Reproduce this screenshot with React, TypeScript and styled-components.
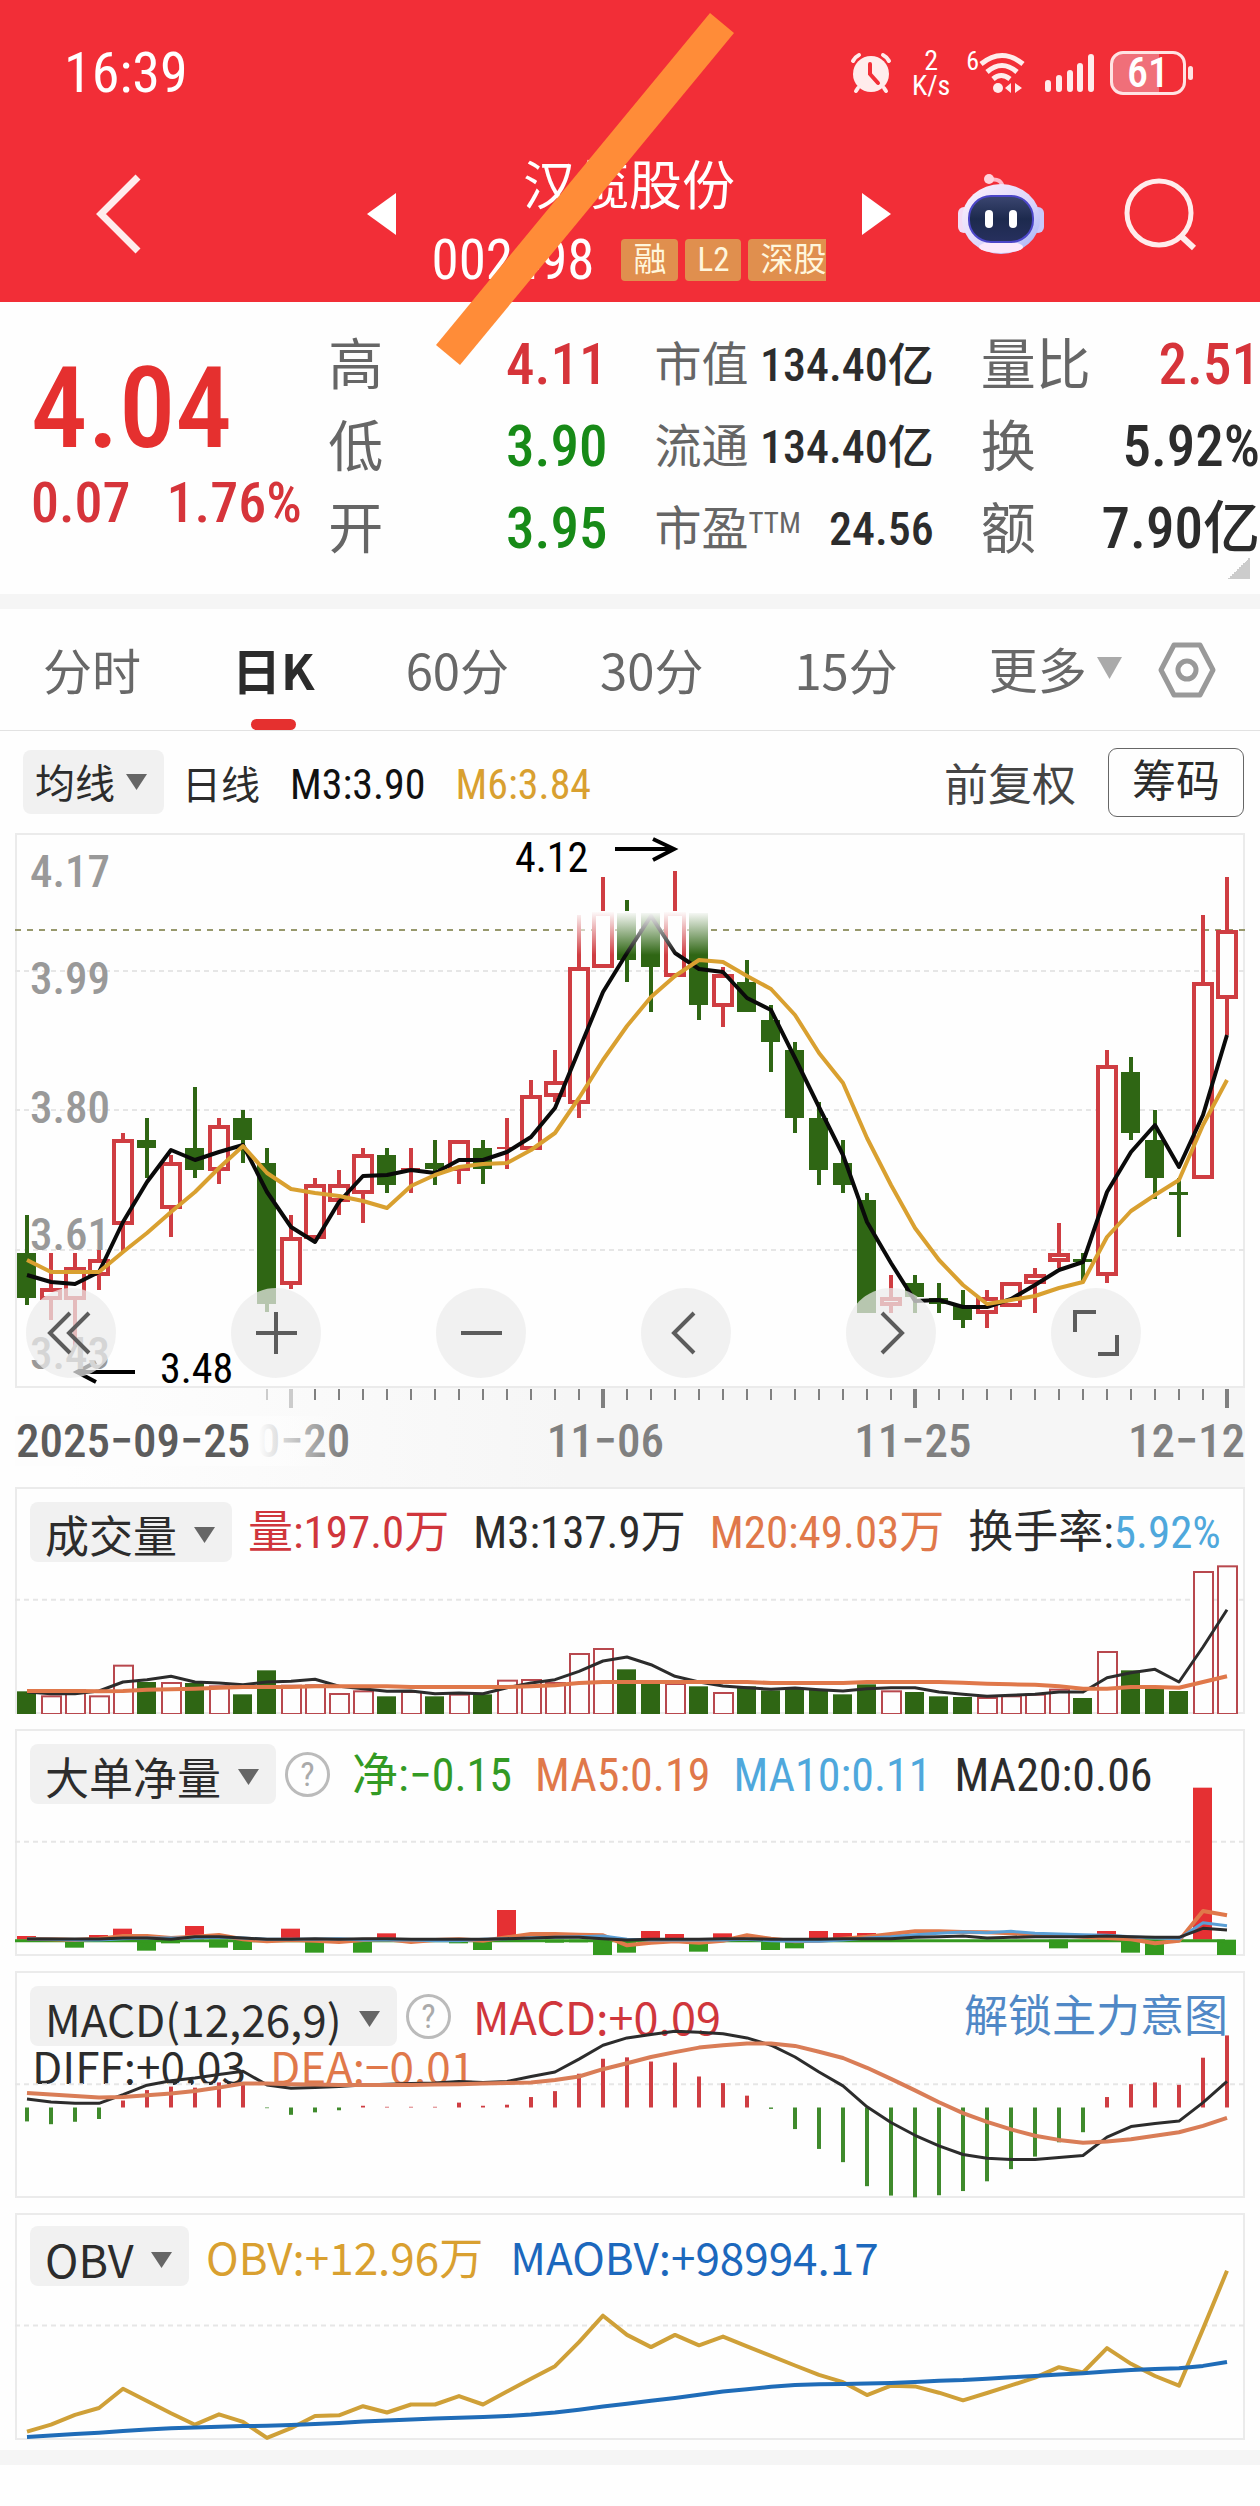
import React from "react";
import styled, { createGlobalStyle } from "styled-components";

const RED = "#f22e37";
const UP = "#cf3d42";
const DOWN = "#2f6614";
const GOLD = "#d9a030";
const ORANGE = "#e0784a";
const INK = "#2c2c2c";
const WIDE = `"Noto Sans CJK SC", sans-serif`;

const GlobalStyle = createGlobalStyle`
  * { box-sizing: border-box; }
  body {
    margin: 0;
    background: #fefefe;
    color: ${INK};
    font-family: "Roboto Condensed", "Noto Sans CJK SC", sans-serif;
  }
  button, select {
    margin: 0;
    padding: 0;
    border: 0;
    background: none;
    color: inherit;
    font: inherit;
    cursor: pointer;
  }
  svg { display: block; }
`;

/* ---------- header ---------- */

const Page = styled.main`
  position: relative;
  overflow: hidden;
`;

const Header = styled.header`
  background: ${RED};
  color: #fff;
  height: 302px;
`;

const StatusBar = styled.div`
  display: flex;
  align-items: center;
  justify-content: space-between;
  padding: 20px 67px 0 64px;
  height: 126px;
`;

const Clock = styled.time`
  font-size: 56px;
  line-height: 60px;
`;

const StatusIcons = styled.div`
  display: flex;
  align-items: center;
`;

const Speed = styled.div`
  display: flex;
  flex-direction: column;
  align-items: center;
  width: 40px;
  margin: 0 15px 0 19px;
  font-size: 28px;
  line-height: 25px;
`;

const WifiGen = styled.span`
  align-self: flex-start;
  font-size: 26px;
  line-height: 26px;
`;

const SignalIcon = styled.svg`
  margin-left: 20px;
`;

const Battery = styled.div`
  display: flex;
  align-items: center;
  justify-content: center;
  width: 76px;
  height: 44px;
  margin-left: 15px;
  border: 3px solid #ffe3e3;
  border-radius: 13px;
  background: linear-gradient(90deg, #f06f79 66%, transparent 66%);
  font-size: 42px;
  font-weight: 500;
  line-height: 40px;
`;

const BatteryTip = styled.i`
  width: 5px;
  height: 14px;
  margin-left: 2px;
  border-radius: 3px;
  background: #ffe3e3;
`;

const TitleBar = styled.div`
  display: flex;
  align-items: center;
  padding: 0 62px 0 94px;
  height: 175px;
`;

const IconButton = styled.button`
  flex: none;
`;

const SearchButton = styled(IconButton)`
  margin-left: 79px;
`;

const StockNav = styled.div`
  display: flex;
  align-items: center;
  justify-content: space-between;
  flex: 1;
  margin: 0 66px 0 225px;
`;

const StockTitle = styled.div`
  display: flex;
  flex-direction: column;
  align-items: center;
  padding-top: 20px;
`;

const StockName = styled.h1`
  margin: 0;
  font-size: 53px;
  font-weight: 400;
  line-height: 72px;
`;

const CodeRow = styled.div`
  display: flex;
  align-items: center;
  gap: 7px;
  height: 74px;
`;

const Code = styled.span`
  margin-right: 20px;
  font-size: 55px;
  line-height: 60px;
`;

const Tag = styled.span<{ $open?: boolean }>`
  height: 42px;
  padding: 0 ${(p) => (p.$open ? 0 : 12)}px 0 12px;
  border-radius: ${(p) => (p.$open ? "4px 0 0 4px" : "4px")};
  background: #e08f4e;
  color: #fff6dc;
  font-size: 33px;
  line-height: 42px;
`;

const Marker = styled.svg`
  position: absolute;
  top: 0;
  left: calc(50% - 230px);
  pointer-events: none;
`;

/* ---------- quote ---------- */

const Quote = styled.section`
  position: relative;
  display: grid;
  grid-template-columns: minmax(0, 250fr) minmax(0, 279fr) minmax(0, 279fr) minmax(0, 279fr);
  column-gap: 47px;
  padding: 22px 0 24px 31px;
  border-bottom: 15px solid #f5f5f5;
  white-space: nowrap;
`;

const PriceBlock = styled.div`
  padding-top: 35px;
  color: #e5302f;
  font-weight: 500;
`;

const Price = styled.div`
  font-size: 113px;
  line-height: 100px;
`;

const Change = styled.div`
  display: flex;
  gap: 36px;
  margin-top: 14px;
  color: #d6343a;
  font-size: 56px;
  line-height: 60px;
`;

const Stats = styled.dl`
  margin: 0;
`;

const Stat = styled.div`
  display: flex;
  align-items: center;
  justify-content: space-between;
  height: 82px;
`;

const StatLabel = styled.dt<{ $small?: boolean }>`
  color: #666;
  font-size: ${(p) => (p.$small ? 47 : 55)}px;
  line-height: 80px;
`;

const Sup = styled.sup`
  font-size: 29px;
  line-height: 0;
  vertical-align: 12px;
`;

const StatValue = styled.dd<{ $small?: boolean; $color?: string }>`
  margin: 0;
  color: ${(p) => p.$color ?? INK};
  font-size: ${(p) => (p.$small ? 46 : 57)}px;
  font-weight: 500;
  line-height: 80px;
`;

const Corner = styled.i`
  position: absolute;
  right: 10px;
  bottom: 15px;
  width: 22px;
  height: 22px;
  background: linear-gradient(135deg, transparent 50%, #ccc 50%);
`;

/* ---------- period tabs ---------- */

const Tabs = styled.nav`
  display: flex;
  align-items: stretch;
  justify-content: space-between;
  height: 122px;
  padding: 0 44px 0 43px;
  border-bottom: 1px solid #e2e2e2;
  font-family: ${WIDE};
  font-size: 49px;
  line-height: 74px;
  white-space: nowrap;
`;

const TabList = styled.div`
  display: flex;
  gap: 91px;
`;

const Tab = styled.button<{ $active?: boolean }>`
  display: flex;
  flex-direction: column;
  align-items: center;
  justify-content: flex-end;
  color: ${(p) => (p.$active ? INK : "#686868")};
  font-weight: ${(p) => (p.$active ? 700 : 400)};

  &::after {
    content: "";
    width: 45px;
    height: 11px;
    margin-top: 13px;
    border-radius: 6px;
    background: ${(p) => (p.$active ? "#e5302f" : "transparent")};
  }
`;

const MoreTab = styled.button`
  display: flex;
  align-items: center;
  gap: 10px;
  padding-bottom: 3px;
  color: #686868;
`;

/* ---------- chart toolbar ---------- */

const Toolbar = styled.div`
  display: flex;
  align-items: center;
  height: 102px;
  padding: 0 16px 0 23px;
  white-space: nowrap;
`;

const PickerBox = styled.span<{ $h: number }>`
  display: inline-grid;
  flex: none;
  height: ${(p) => p.$h}px;
  border-radius: 8px;
  background: #f1f1f1;

  > * { grid-area: 1 / 1; }
  > svg {
    align-self: center;
    justify-self: end;
    margin-right: 17px;
    pointer-events: none;
  }
`;

const PickerSelect = styled.select<{ $size: number; $compact?: boolean }>`
  appearance: none;
  padding: 0 ${(p) => (p.$compact ? 49 : 55)}px 2px ${(p) => (p.$compact ? 12 : 15)}px;
  color: ${INK};
  font-family: ${WIDE};
  font-size: ${(p) => p.$size}px;
`;

const Legend = styled.span<{ $color?: string; $size?: number }>`
  color: ${(p) => p.$color ?? INK};
  font-size: ${(p) => p.$size ?? 42}px;
`;

const LineLegend = styled.div`
  display: flex;
  align-items: baseline;
  gap: 30px;
  margin-left: 18px;
`;

const Adjust = styled.button`
  margin: 0 32px 0 auto;
  color: #444;
  font-size: 44px;
`;

const Chips = styled.button`
  width: 136px;
  height: 69px;
  border: 1px solid #666;
  border-radius: 9px;
  font-size: 44px;
  line-height: 64px;
`;

/* ---------- charts ---------- */

const ChartArea = styled.section`
  padding: 0 15px 10px;
  border-bottom: 15px solid #f5f5f5;
`;

const Frame = styled.div<{ $h: number }>`
  position: relative;
  display: grid;
  grid-template-columns: minmax(0, 1fr);
  height: ${(p) => p.$h}px;
  box-shadow: inset 0 0 0 2px #ebebeb;

  > * { grid-area: 1 / 1; }
`;

const Plot = styled.svg`
  width: 100%;
  height: 100%;
  pointer-events: none;
`;

const PriceTick = styled.span<{ $y: number }>`
  position: absolute;
  left: 15px;
  top: ${(p) => p.$y}px;
  color: #999;
  font-size: 45px;
  font-weight: 500;
  line-height: 50px;
`;

const Extreme = styled.span<{ $x: number; $y: number }>`
  position: absolute;
  left: ${(p) => p.$x}px;
  top: ${(p) => p.$y}px;
  color: #000;
  font-size: 42px;
  line-height: 44px;
`;

const Controls = styled.div`
  z-index: 1;
  display: flex;
  align-items: center;
  align-self: end;
  gap: 115px;
  padding: 0 0 10px 11px;
`;

const RoundButton = styled.button`
  display: grid;
  place-items: center;
  width: 90px;
  height: 90px;
  border-radius: 50%;
  background: rgba(236, 236, 236, 0.72);
`;

const Axis = styled.div`
  position: relative;
  height: 99px;
  background: linear-gradient(90deg, #fefefe 4%, #f6f6f6 45%, #f6f6f6);
  color: #808080;
  font-size: 47px;
  font-weight: 500;
  line-height: 50px;
`;

const AxisDate = styled.span<{ $x: number }>`
  position: absolute;
  top: 28px;
  left: ${(p) => p.$x}%;
  transform: translateX(-50%);
`;

const LastDate = styled.span`
  position: absolute;
  top: 28px;
  right: 0;
`;

const FirstDate = styled.span`
  position: absolute;
  top: 28px;
  left: 0;
  padding: 0 90px 0 1px;
  background: linear-gradient(90deg, #fdfdfd 75%, rgba(253, 253, 253, 0));
  color: #5c5c5c;
`;

const Panels = styled.div`
  display: flex;
  flex-direction: column;
  gap: 15px;
`;

const PanelHead = styled.div<{ $wrap?: boolean }>`
  align-self: start;
  display: flex;
  flex-wrap: ${(p) => (p.$wrap ? "wrap" : "nowrap")};
  align-items: center;
  padding: 13px 17px 0 15px;
  white-space: nowrap;
`;

const Readings = styled.div<{ $gap: number; $lead: number; $wide?: boolean }>`
  display: flex;
  gap: ${(p) => p.$gap}px;
  margin-left: ${(p) => p.$lead}px;
  padding-top: ${(p) => (p.$wide ? 0 : 2)}px;
  font-family: ${(p) => (p.$wide ? WIDE : "inherit")};
  line-height: ${(p) => (p.$wide ? 60 : 62)}px;
`;

const SecondLine = styled.div`
  display: flex;
  flex-basis: 100%;
  gap: 24px;
  padding-left: 2px;
  font-family: ${WIDE};
  line-height: 34px;
`;

const Help = styled.button`
  width: 45px;
  height: 45px;
  margin-left: 9px;
  border: 3px solid #bbb;
  border-radius: 50%;
  color: #aaa;
  font-size: 34px;
  line-height: 36px;
`;

const Unlock = styled.a`
  margin-left: auto;
  padding-top: 2px;
  color: #5088c6;
  font-size: 44px;
  line-height: 62px;
  text-decoration: none;
`;

/* ---------- data ---------- */

type Candle = [up: number, high: number, top: number, bottom: number, low: number];

// Vertical positions in the price frame, offset by PRICE_TOP.
const PRICE_TOP = 833;
const candles: Candle[] = [
  [0, 1215, 1253, 1298, 1305], [1, 1253, 1288, 1299, 1320], [1, 1253, 1267, 1299, 1347],
  [1, 1250, 1259, 1275, 1290], [1, 1133, 1139, 1224, 1252], [0, 1118, 1140, 1148, 1178],
  [1, 1155, 1162, 1208, 1237], [0, 1087, 1148, 1170, 1178], [1, 1118, 1125, 1170, 1184],
  [0, 1110, 1118, 1140, 1163], [0, 1148, 1163, 1304, 1312], [1, 1215, 1237, 1284, 1289],
  [1, 1178, 1184, 1238, 1243], [1, 1170, 1184, 1201, 1215], [1, 1148, 1154, 1193, 1223],
  [0, 1148, 1155, 1185, 1193], [1, 1148, 1168, 1170, 1193], [0, 1140, 1163, 1169, 1185],
  [1, 1140, 1140, 1170, 1184], [0, 1140, 1148, 1169, 1184], [1, 1118, 1147, 1149, 1169],
  [1, 1080, 1095, 1149, 1149], [1, 1050, 1081, 1096, 1102], [1, 915, 967, 1103, 1118],
  [1, 877, 912, 967, 967], [0, 900, 913, 960, 982], [0, 913, 913, 967, 1012],
  [1, 871, 912, 976, 976], [0, 913, 913, 1005, 1020], [1, 967, 974, 1006, 1027],
  [0, 960, 982, 1012, 1012], [0, 1005, 1020, 1042, 1072], [0, 1042, 1050, 1118, 1133],
  [0, 1102, 1118, 1170, 1185], [0, 1140, 1163, 1185, 1193], [0, 1193, 1200, 1313, 1313],
  [1, 1275, 1297, 1305, 1313], [0, 1275, 1283, 1297, 1313], [0, 1283, 1298, 1304, 1313],
  [0, 1290, 1306, 1320, 1328], [1, 1290, 1297, 1313, 1328], [1, 1282, 1282, 1306, 1306],
  [1, 1268, 1274, 1283, 1313], [1, 1223, 1253, 1261, 1268], [0, 1253, 1259, 1262, 1282],
  [1, 1050, 1065, 1275, 1283], [0, 1057, 1072, 1133, 1140], [0, 1110, 1140, 1178, 1199],
  [0, 1178, 1192, 1195, 1237], [1, 915, 982, 1178, 1178], [1, 877, 930, 998, 1035],
];
const ma3 = [1275, 1282, 1284, 1272, 1222, 1182, 1150, 1160, 1152, 1145, 1192, 1227, 1242, 1202, 1176, 1175, 1170, 1173, 1160, 1160, 1152, 1137, 1108, 1050, 992, 953, 916, 953, 969, 972, 998, 1010, 1058, 1107, 1155, 1222, 1263, 1301, 1300, 1307, 1307, 1299, 1285, 1270, 1262, 1192, 1152, 1125, 1167, 1115, 1035];
const ma6 = [1260, 1272, 1272, 1272, 1252, 1233, 1212, 1192, 1168, 1146, 1173, 1189, 1193, 1196, 1201, 1208, 1186, 1175, 1167, 1164, 1163, 1150, 1133, 1098, 1060, 1026, 997, 976, 960, 962, 976, 989, 1015, 1053, 1083, 1138, 1185, 1228, 1260, 1285, 1304, 1300, 1296, 1288, 1282, 1237, 1211, 1195, 1180, 1125, 1080];

// The indicator series are kept at three units per pixel of panel height.
const volTop = [633, 645, 627, 645, 553, 605, 605, 608, 615, 642, 570, 613, 612, 638, 630, 648, 632, 648, 640, 642, 598, 596, 605, 518, 503, 567, 605, 608, 618, 635, 618, 630, 623, 628, 642, 612, 630, 635, 648, 650, 650, 645, 640, 625, 653, 512, 570, 625, 632, 272, 255];
const vol3 = [635, 640, 640, 632, 605, 598, 588, 605, 608, 613, 605, 603, 597, 618, 625, 633, 632, 640, 638, 640, 622, 608, 598, 573, 542, 530, 553, 588, 605, 617, 622, 627, 623, 628, 632, 625, 622, 622, 635, 642, 648, 645, 642, 635, 635, 592, 577, 567, 605, 500, 388];
const vol20 = [632, 632, 632, 633, 632, 628, 627, 625, 622, 620, 620, 620, 618, 618, 618, 618, 620, 620, 620, 620, 620, 618, 615, 608, 605, 605, 605, 605, 605, 605, 605, 608, 608, 608, 608, 605, 605, 605, 605, 607, 610, 612, 613, 618, 625, 625, 620, 620, 622, 605, 588];

const netBars: [number, number][] = [
  [0, 1368], [2, 1403], [3, 1365], [4, 1346], [5, 1412], [6, 1390], [7, 1338], [8, 1403], [9, 1410],
  [11, 1346], [12, 1418], [14, 1418], [15, 1360], [18, 1390], [19, 1410], [20, 1290], [22, 1388],
  [23, 1387], [24, 1425], [25, 1418], [26, 1353], [27, 1362], [28, 1415], [29, 1360], [31, 1410],
  [32, 1405], [33, 1353], [34, 1359], [35, 1359], [43, 1405], [45, 1353], [46, 1418], [47, 1425],
  [49, 923], [50, 1425],
];
const net5 = [1376, 1378, 1380, 1376, 1368, 1368, 1374, 1370, 1365, 1378, 1384, 1380, 1382, 1386, 1380, 1378, 1386, 1380, 1378, 1382, 1372, 1362, 1362, 1364, 1366, 1396, 1388, 1384, 1388, 1382, 1366, 1376, 1384, 1382, 1376, 1370, 1362, 1354, 1354, 1356, 1357, 1360, 1364, 1366, 1370, 1374, 1378, 1390, 1382, 1293, 1306];
const net10 = [1377, 1378, 1380, 1380, 1376, 1374, 1374, 1374, 1372, 1374, 1378, 1378, 1378, 1376, 1380, 1380, 1380, 1382, 1382, 1378, 1376, 1374, 1372, 1370, 1368, 1378, 1380, 1380, 1380, 1380, 1378, 1382, 1384, 1384, 1380, 1374, 1370, 1364, 1360, 1356, 1358, 1354, 1360, 1362, 1364, 1366, 1370, 1374, 1376, 1328, 1337];
const net20 = [1377, 1377, 1377, 1377, 1374, 1374, 1378, 1370, 1370, 1374, 1378, 1378, 1376, 1378, 1376, 1376, 1378, 1378, 1378, 1378, 1376, 1374, 1372, 1372, 1376, 1380, 1378, 1378, 1378, 1376, 1376, 1378, 1378, 1378, 1376, 1376, 1376, 1372, 1370, 1368, 1374, 1372, 1370, 1370, 1370, 1368, 1370, 1372, 1372, 1345, 1350];

const macdBar = [462, 470, 463, 455, 402, 372, 362, 365, 350, 352, 424, 443, 436, 430, 417, 420, 420, 420, 408, 417, 414, 392, 375, 325, 282, 278, 290, 293, 333, 352, 388, 426, 484, 541, 579, 648, 675, 680, 674, 662, 634, 599, 563, 522, 493, 392, 355, 350, 357, 279, 215];
const diff = [398, 406, 410, 410, 385, 358, 345, 337, 327, 318, 357, 367, 365, 362, 357, 355, 353, 352, 347, 350, 347, 333, 320, 283, 243, 222, 212, 203, 206, 210, 222, 243, 277, 320, 360, 420, 465, 502, 532, 557, 568, 571, 571, 566, 560, 507, 477, 468, 461, 408, 347];
const dea = [380, 385, 389, 393, 392, 387, 382, 375, 365, 353, 353, 355, 356, 357, 357, 357, 357, 356, 355, 353, 352, 350, 343, 333, 312, 295, 277, 263, 250, 243, 238, 238, 245, 262, 280, 308, 340, 373, 407, 438, 463, 485, 503, 515, 523, 520, 513, 503, 493, 475, 452];

const obv = [1355, 1335, 1307, 1287, 1232, 1267, 1302, 1335, 1305, 1327, 1373, 1345, 1310, 1308, 1282, 1300, 1277, 1277, 1253, 1277, 1240, 1203, 1167, 1098, 1022, 1077, 1112, 1077, 1107, 1082, 1110, 1137, 1165, 1192, 1213, 1250, 1223, 1225, 1243, 1265, 1244, 1222, 1200, 1170, 1185, 1115, 1160, 1195, 1223, 1060, 893];
const maobv = [1370, 1366, 1362, 1358, 1353, 1349, 1345, 1343, 1341, 1339, 1338, 1336, 1333, 1330, 1326, 1323, 1320, 1317, 1315, 1313, 1310, 1306, 1300, 1292, 1283, 1275, 1266, 1258, 1249, 1240, 1233, 1226, 1221, 1219, 1218, 1217, 1215, 1212, 1209, 1207, 1203, 1199, 1195, 1191, 1187, 1182, 1178, 1175, 1173, 1166, 1155];

const xOf = (i: number) => 12 + 24 * i;
const points = (values: number[], y: (v: number) => number) =>
  values.map((v, i) => `${xOf(i)},${y(v).toFixed(1)}`).join(" ");

/* ---------- small parts ---------- */

function Caret({ w = 21, h = 16, color = "#666" }: { w?: number; h?: number; color?: string }) {
  return (
    <svg width={w} height={h} viewBox="0 0 20 16" preserveAspectRatio="none" aria-hidden="true">
      <path d="M0 0H20L10 16Z" fill={color} />
    </svg>
  );
}

function Picker({ label, text, size, height = 60, compact }: { label: string; text: string; size: number; height?: number; compact?: boolean }) {
  return (
    <PickerBox $h={height}>
      <PickerSelect aria-label={label} $size={size} $compact={compact} defaultValue={text}>
        <option>{text}</option>
      </PickerSelect>
      <Caret />
    </PickerBox>
  );
}

function Line({ values, y, color, width = 4 }: { values: number[]; y: (v: number) => number; color: string; width?: number }) {
  return <polyline points={points(values, y)} fill="none" stroke={color} strokeWidth={width} strokeLinejoin="round" />;
}

function Guide({ y }: { y: number }) {
  return <line x1="0" x2="1230" y1={y} y2={y} stroke="#e6e6e6" strokeWidth="2" strokeDasharray="5 4" />;
}

function StatusGlyphs() {
  return (
    <StatusIcons>
      <svg width="42" height="42" viewBox="0 0 42 42" aria-label="闹钟" stroke="#ffecec" strokeLinecap="round">
        <path d="M3 9Q5 5 9 3M39 9Q37 5 33 3M8 36L6 39M34 36L36 39" strokeWidth="4" fill="none" />
        <circle cx="21" cy="22" r="18" fill="#ffecec" stroke="none" />
        <path d="M20 12V22L28 31" stroke={RED} strokeWidth="4" fill="none" />
      </svg>
      <Speed>
        <span>2</span>
        <span>K/s</span>
      </Speed>
      <WifiGen>6</WifiGen>
      <svg width="46" height="42" viewBox="0 0 46 42" aria-label="无线网络" fill="none" stroke="#ffecec" strokeWidth="5">
        <path d="M2 12Q23 -5 44 12M8 20Q23 7 38 20M14 27Q22 20 31 27" />
        <circle cx="19" cy="36" r="5" fill="#ffecec" stroke="none" />
        <path d="M26 36L32 31V41ZM43 36L36 31V41Z" fill="#ffecec" stroke="none" />
      </svg>
      <SignalIcon width="50" height="40" viewBox="0 0 50 40" aria-label="信号" stroke="#ffecec" strokeWidth="6" strokeLinecap="round">
        <path d="M3 30V36M14 25V36M25 20V36M35 13V36M46 4V36" />
      </SignalIcon>
      <Battery>61</Battery>
      <BatteryTip />
    </StatusIcons>
  );
}

function Robot() {
  return (
    <svg width="88" height="82" viewBox="0 0 88 82" aria-hidden="true">
      <defs>
        <linearGradient id="shell" x1="0" y1="0" x2="1" y2="1">
          <stop offset="0" stopColor="#fff3fb" />
          <stop offset="60%" stopColor="#d9d4fb" />
          <stop offset="1" stopColor="#9fb0f5" />
        </linearGradient>
        <linearGradient id="visor" x1="0" y1="0" x2="0" y2="1">
          <stop offset="0" stopColor="#3b4670" />
          <stop offset="50%" stopColor="#1d2a4e" />
          <stop offset="1" stopColor="#27305e" />
        </linearGradient>
      </defs>
      <path d="M32 7Q45 4 46 16" fill="none" stroke="#ffb9c8" strokeWidth="4" />
      <circle cx="32" cy="6" r="5" fill="#ffd3dc" />
      <rect x="1" y="34" width="12" height="26" rx="6" fill="#f3dcf5" />
      <rect x="75" y="34" width="12" height="26" rx="6" fill="#c9c8fa" />
      <ellipse cx="44" cy="46" rx="39" ry="35" fill="url(#shell)" />
      <ellipse cx="44" cy="74" rx="22" ry="6" fill="#fbe9fb" />
      <rect x="12" y="23" width="64" height="46" rx="22" fill="url(#visor)" stroke="#4b46c8" strokeWidth="2" />
      <rect x="28" y="37" width="8" height="18" rx="4" fill="#fff" />
      <rect x="52" y="37" width="8" height="18" rx="4" fill="#fff" />
    </svg>
  );
}

const glyph = { width: 56, height: 48, viewBox: "0 0 56 48", fill: "none", stroke: "#5c5c5c", strokeWidth: 4, "aria-hidden": true } as const;

const controls = [
  { name: "最早", path: "M27 4L7 24L27 44M46 4L26 24L46 44" },
  { name: "放大", path: "M8 24H49M28 3V45" },
  { name: "缩小", path: "M8 24H49" },
  { name: "向左", path: "M36 4L16 24L36 44" },
  { name: "向右", path: "M19 4L39 24L19 44" },
  { name: "全屏", path: "M7 23V3H28M49 26V45H30" },
];

/* ---------- sections ---------- */

function PriceChart() {
  const y = (v: number) => v - PRICE_TOP;
  return (
    <Frame $h={555}>
      <PriceTick $y={14}>4.17</PriceTick>
      <PriceTick $y={121}>3.99</PriceTick>
      <PriceTick $y={250}>3.80</PriceTick>
      <PriceTick $y={377}>3.61</PriceTick>
      <PriceTick $y={496}>3.43</PriceTick>
      <Plot viewBox="0 0 1230 555" preserveAspectRatio="none" role="img" aria-label="日K线图">
        <defs>
          <linearGradient id="fade" x1="0" y1="0" x2="0" y2="1">
            <stop offset="0" stopColor="#fefefe" />
            <stop offset="1" stopColor="#fefefe" stopOpacity="0" />
          </linearGradient>
        </defs>
        <Guide y={y(971)} />
        <Guide y={y(1110)} />
        <Guide y={y(1250)} />
        <line x1="0" x2="1230" y1={y(930)} y2={y(930)} stroke="#97986c" strokeWidth="2" strokeDasharray="6 6" />
        {candles.map(([up, high, top, bottom, low], i) => {
          const color = up ? UP : DOWN;
          const hollow = up === 1 && bottom - top > 3;
          return (
            <g key={i} stroke={color} strokeWidth="4">
              <path d={`M${xOf(i)} ${y(high)}V${y(top)}M${xOf(i)} ${y(bottom)}V${y(low)}`} />
              {hollow ? (
                <rect x={xOf(i) - 9} y={y(top) + 2} width="18" height={Math.max(bottom - top - 3, 3)} fill="#fefefe" />
              ) : (
                <rect x={xOf(i) - 10} y={y(top)} width="19" height={bottom - top} fill={color} stroke="none" />
              )}
            </g>
          );
        })}
        <Line values={ma3} y={y} color="#0a0a0a" />
        <Line values={ma6} y={y} color={GOLD} />
        <rect x="560" y={y(911)} width="134" height="44" fill="url(#fade)" />
        <path d="M600 16H659M638 6L659 16L638 27" fill="none" stroke="#000" strokeWidth="4" />
        <path d="M120 539H62M81 529L62 539L81 549" fill="none" stroke="#000" strokeWidth="4" />
      </Plot>
      <Extreme $x={500} $y={3}>4.12</Extreme>
      <Extreme $x={145} $y={514}>3.48</Extreme>
      <Controls>
        {controls.map((c) => (
          <RoundButton key={c.name} aria-label={c.name}>
            <svg {...glyph}>
              <path d={c.path} />
            </svg>
          </RoundButton>
        ))}
      </Controls>
    </Frame>
  );
}

function DateAxis() {
  return (
    <Axis>
      <Plot viewBox="0 0 1230 99" preserveAspectRatio="none" aria-hidden="true">
        {candles.slice(10).map((_, n) => {
          const i = n + 10;
          const major = i === 50 || i === 11 || i === 24 || i === 37;
          return (
            <line key={i} x1={xOf(i)} x2={xOf(i)} y1="1" y2={major ? 20 : 12} stroke={i < 12 ? "#ccc" : "#808080"} strokeWidth={major ? 4 : 2} />
          );
        })}
      </Plot>
      <AxisDate $x={22.5}>10−20</AxisDate>
      <AxisDate $x={48}>11−06</AxisDate>
      <AxisDate $x={73}>11−25</AxisDate>
      <LastDate>12−12</LastDate>
      <FirstDate>2025−09−25</FirstDate>
    </Axis>
  );
}

function VolumePanel() {
  const y = (v: number) => (v - 20) / 3;
  return (
    <Frame $h={227}>
      <PanelHead>
        <Picker label="指标" text="成交量" size={44} />
        <Readings $gap={24} $lead={16}>
          <Legend $size={45} $color="#d0363c">量:197.0万</Legend>
          <Legend $size={45}>M3:137.9万</Legend>
          <Legend $size={45} $color={ORANGE}>M20:49.03万</Legend>
          <Legend $size={45}>换手率:<Legend $size={45} $color="#4fa8dc">5.92%</Legend></Legend>
        </Readings>
      </PanelHead>
      <Plot viewBox="0 0 1230 227" preserveAspectRatio="none" role="img" aria-label="成交量">
        <Guide y={y(358)} />
        {volTop.map((v, i) =>
          candles[i][0] ? (
            <rect key={i} x={xOf(i) - 9} y={y(v) + 1} width="19" height={226 - y(v)} fill="#fefefe" stroke="#b8484e" strokeWidth="2" />
          ) : (
            <rect key={i} x={xOf(i) - 10} y={y(v)} width="19" height={227 - y(v)} fill={DOWN} />
          ),
        )}
        <Line values={vol3} y={y} color={INK} width={3} />
        <Line values={vol20} y={y} color={ORANGE} />
      </Plot>
    </Frame>
  );
}

function NetPanel() {
  const y = (v: number) => (v - 747) / 3;
  const base = y(1379);
  return (
    <Frame $h={227}>
      <PanelHead>
        <Picker label="指标" text="大单净量" size={44} />
        <Help aria-label="大单净量说明">?</Help>
        <Readings $gap={23} $lead={22}>
          <Legend $size={46} $color="#339a24">净:−0.15</Legend>
          <Legend $size={46} $color={ORANGE}>MA5:0.19</Legend>
          <Legend $size={46} $color="#4fa8dc">MA10:0.11</Legend>
          <Legend $size={46}>MA20:0.06</Legend>
        </Readings>
      </PanelHead>
      <Plot viewBox="0 0 1230 227" preserveAspectRatio="none" role="img" aria-label="大单净量">
        <Guide y={y(1085)} />
        {netBars.map(([i, v]) => (
          <rect key={i} x={xOf(i) - 10} y={Math.min(y(v), base)} width="19" height={Math.abs(y(v) - base)} fill={v < 1379 ? "#e53033" : "#34991f"} />
        ))}
        <line x1="0" x2="1210" y1={base + 1} y2={base + 1} stroke="#34991f" strokeWidth="3" />
        <Line values={net5} y={y} color={ORANGE} />
        <Line values={net10} y={y} color="#5b9fd6" width={3} />
        <Line values={net20} y={y} color={INK} width={3} />
      </Plot>
    </Frame>
  );
}

// The two lower panels use a slightly coarser vertical unit.
const LOWER = 2.872;

function MacdPanel() {
  const y = (v: number) => (v - 30) / LOWER;
  const base = y(422);
  return (
    <Frame $h={227}>
      <PanelHead $wrap>
        <Picker label="指标" text="MACD(12,26,9)" size={44} />
        <Help aria-label="MACD说明">?</Help>
        <Readings $gap={24} $lead={22} $wide>
          <Legend $size={45} $color="#d0363c">MACD:+0.09</Legend>
        </Readings>
        <Unlock href="#unlock">解锁主力意图</Unlock>
        <SecondLine>
          <Legend $size={44}>DIFF:+0.03</Legend>
          <Legend $size={44} $color={ORANGE}>DEA:−0.01</Legend>
        </SecondLine>
      </PanelHead>
      <Plot viewBox="0 0 1230 227" preserveAspectRatio="none" role="img" aria-label="MACD">
        <Guide y={y(355)} />
        {macdBar.map((v, i) => (
          <line key={i} x1={xOf(i)} x2={xOf(i)} y1={base} y2={y(v)} stroke={v < 422 ? UP : "#3f8a2c"} strokeWidth="4" />
        ))}
        <Line values={diff} y={y} color={INK} width={3} />
        <Line values={dea} y={y} color="#d97d57" />
      </Plot>
    </Frame>
  );
}

function ObvPanel() {
  const y = (v: number) => (v - 727) / LOWER;
  return (
    <Frame $h={227}>
      <PanelHead>
        <Picker label="指标" text="OBV" size={45} />
        <Readings $gap={27} $lead={17} $wide>
          <Legend $size={44} $color={GOLD}>OBV:+12.96万</Legend>
          <Legend $size={44} $color="#1c68bd">MAOBV:+98994.17</Legend>
        </Readings>
      </PanelHead>
      <Plot viewBox="0 0 1230 227" preserveAspectRatio="none" role="img" aria-label="OBV">
        <Guide y={y(1050)} />
        <Line values={obv} y={y} color="#cfa038" />
        <Line values={maobv} y={y} color="#1f6cb8" />
      </Plot>
    </Frame>
  );
}

const RISE = "#d6343a";
const FALL = "#178a17";

const statColumns = [
  { small: false, rows: [["高", "4.11", RISE], ["低", "3.90", FALL], ["开", "3.95", FALL]] },
  { small: true, rows: [["市值", "134.40亿"], ["流通", "134.40亿"], ["市盈", "24.56"]] },
  { small: false, rows: [["量比", "2.51", RISE], ["换", "5.92%"], ["额", "7.90亿"]] },
];

export default function App() {
  return (
    <Page>
      <GlobalStyle />
      <Header>
        <StatusBar>
          <Clock>16:39</Clock>
          <StatusGlyphs />
        </StatusBar>
        <TitleBar>
          <IconButton aria-label="返回">
            <svg width="48" height="80" viewBox="0 0 48 80" fill="none" stroke="#ffecec" strokeWidth="7" aria-hidden="true">
              <path d="M44 3L7 40L44 77" />
            </svg>
          </IconButton>
          <StockNav>
            <IconButton aria-label="上一只">
              <svg width="29" height="42" viewBox="0 0 29 42" fill="#fff" aria-hidden="true"><path d="M29 0V42L0 21Z" /></svg>
            </IconButton>
            <StockTitle>
              <StockName>汉缆股份</StockName>
              <CodeRow>
                <Code>002498</Code>
                <Tag>融</Tag>
                <Tag>L2</Tag>
                <Tag $open>深股</Tag>
              </CodeRow>
            </StockTitle>
            <IconButton aria-label="下一只">
              <svg width="29" height="42" viewBox="0 0 29 42" fill="#fff" aria-hidden="true"><path d="M0 0V42L29 21Z" /></svg>
            </IconButton>
          </StockNav>
          <IconButton aria-label="智能助手"><Robot /></IconButton>
          <SearchButton aria-label="搜索">
            <svg width="74" height="74" viewBox="0 0 74 74" fill="none" stroke="#ffecec" strokeWidth="5" aria-hidden="true">
              <circle cx="35" cy="36" r="32" />
              <path d="M57 59L70 71" strokeWidth="6" />
            </svg>
          </SearchButton>
        </TitleBar>
      </Header>

      <Quote>
        <PriceBlock>
          <Price>4.04</Price>
          <Change>
            <span>0.07</span>
            <span>1.76%</span>
          </Change>
        </PriceBlock>
        {statColumns.map((column, c) => (
          <Stats key={c}>
            {column.rows.map(([name, value, color]) => (
              <Stat key={name}>
                <StatLabel $small={column.small}>
                  {name}
                  {name === "市盈" && <Sup>TTM</Sup>}
                </StatLabel>
                <StatValue $small={column.small} $color={color}>{value}</StatValue>
              </Stat>
            ))}
          </Stats>
        ))}
        <Corner />
      </Quote>

      <Tabs aria-label="周期">
        <TabList>
          <Tab>分时</Tab>
          <Tab $active aria-current="true">日K</Tab>
          <Tab>60分</Tab>
          <Tab>30分</Tab>
          <Tab>15分</Tab>
          <MoreTab>
            更多
            <Caret w={25} h={22} color="#aaa" />
          </MoreTab>
        </TabList>
        <IconButton aria-label="设置">
          <svg width="58" height="56" viewBox="0 0 58 56" fill="none" stroke="#999" strokeWidth="5" strokeLinejoin="round" aria-hidden="true">
            <path d="M16 3H42L55 28L42 53H16L3 28Z" />
            <circle cx="29" cy="28" r="9" />
          </svg>
        </IconButton>
      </Tabs>

      <Toolbar>
        <Picker label="主图指标" text="均线" size={40} height={64} compact />
        <LineLegend>
          <Legend $size={39}>日线</Legend>
          <Legend $color="#111">M3:3.90</Legend>
          <Legend $color={GOLD}>M6:3.84</Legend>
        </LineLegend>
        <Adjust>前复权</Adjust>
        <Chips>筹码</Chips>
      </Toolbar>

      <ChartArea>
        <PriceChart />
        <DateAxis />
        <Panels>
          <VolumePanel />
          <NetPanel />
          <MacdPanel />
          <ObvPanel />
        </Panels>
      </ChartArea>

      <Marker width="340" height="380" viewBox="0 0 340 380" aria-hidden="true">
        <path d="M310 13L334 33L60 365L36 345Z" fill="#ff8c38" />
      </Marker>
    </Page>
  );
}
